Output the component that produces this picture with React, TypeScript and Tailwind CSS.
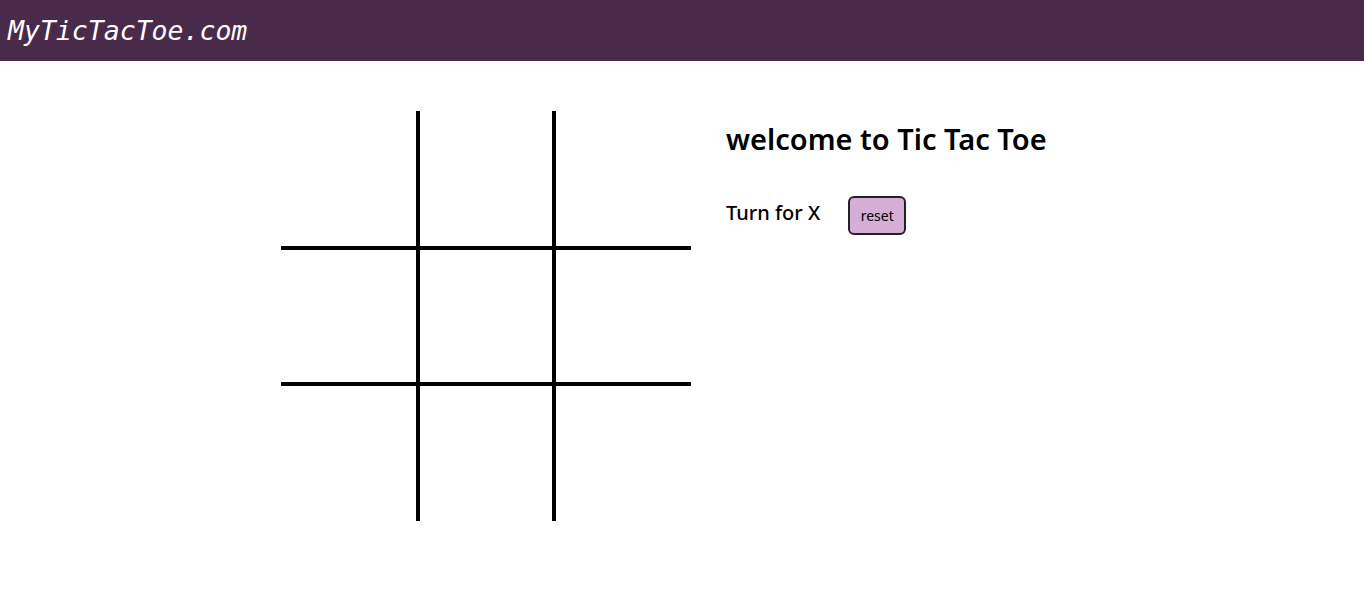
import { useState } from 'react'

const cellBorders = [
  'border-r-2 border-b-2 w-[137px] h-[137px]',
  'border-x-2 border-b-2 w-[136px] h-[137px]',
  'border-l-2 border-b-2 w-[137px] h-[137px]',
  'border-r-2 border-y-2 w-[137px] h-[136px]',
  'border-2 w-[136px] h-[136px]',
  'border-l-2 border-y-2 w-[137px] h-[136px]',
  'border-r-2 border-t-2 w-[137px] h-[137px]',
  'border-x-2 border-t-2 w-[136px] h-[137px]',
  'border-l-2 border-t-2 w-[137px] h-[137px]',
]

export default function App() {
  const [cells, setCells] = useState<string[]>(Array(9).fill(''))
  const [turn, setTurn] = useState('X')

  const play = (i: number) => {
    if (cells[i]) return
    const next = [...cells]
    next[i] = turn
    setCells(next)
    setTurn(turn === 'X' ? 'O' : 'X')
  }

  const reset = () => {
    setCells(Array(9).fill(''))
    setTurn('X')
  }

  return (
    <div className="min-h-screen bg-white">
      <header className="h-[61px] bg-[#4a2a4b] flex items-center px-2">
        <h1 className="text-white italic text-[26.5px] font-['DejaVu_Sans_Mono',monospace] mt-[1px]">
          MyTicTacToe.com
        </h1>
      </header>

      <main className="flex justify-center gap-[35px] mt-[50px]">
        <div className="grid grid-cols-[137px_136px_137px] w-[410px]">
          {cells.map((c, i) => (
            <div
              key={i}
              onClick={() => play(i)}
              className={`${cellBorders[i]} border-black flex items-center justify-center text-6xl font-['Noto_Sans',sans-serif] cursor-pointer`}
            >
              {c}
            </div>
          ))}
        </div>

        <div className="w-[357px] font-['Noto_Sans',sans-serif] text-black">
          <h2 className="text-[29px] font-semibold mt-[10px] leading-tight">
            welcome to Tic Tac Toe
          </h2>
          <div className="flex items-center mt-[39px]">
            <span className="text-[20px] font-medium mb-[6px]">Turn for {turn}</span>
            <button
              onClick={reset}
              className="ml-[28px] w-[58px] h-[39px] bg-[#d4aed4] border-2 border-[#222] rounded-md text-[14px]"
            >
              reset
            </button>
          </div>
        </div>
      </main>
    </div>
  )
}
